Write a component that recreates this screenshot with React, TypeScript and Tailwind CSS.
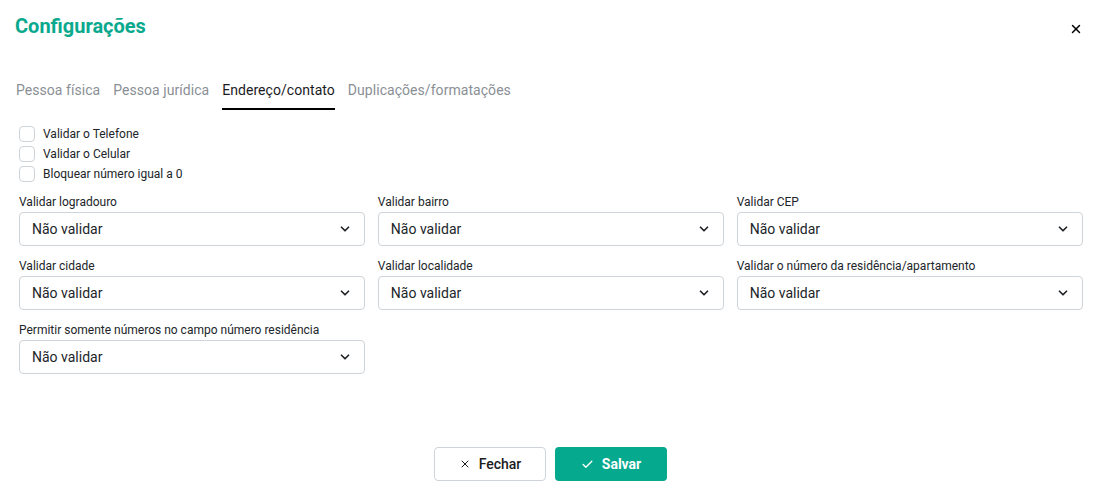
import { Check, ChevronDown, X } from "lucide-react";

const tabs = ["Pessoa física", "Pessoa jurídica", "Endereço/contato", "Duplicações/formatações"];
const checks = ["Validar o Telefone", "Validar o Celular", "Bloquear número igual a 0"];
const selects = [
  "Validar logradouro",
  "Validar bairro",
  "Validar CEP",
  "Validar cidade",
  "Validar localidade",
  "Validar o número da residência/apartamento",
  "Permitir somente números no campo número residência",
];

function SelectField({ label }: { label: string }) {
  return (
    <div className="flex flex-col">
      <label className="text-[12px] leading-4 text-[#212529] mb-[2px]">{label}</label>
      <div className="h-[34px] border border-[#ced4da] rounded-[4px] flex items-center justify-between pl-[12px] pr-[12px] bg-white">
        <span className="text-[14px] text-[#212529]">Não validar</span>
        <ChevronDown className="w-[14px] h-[14px] text-[#212529]" strokeWidth={3} />
      </div>
    </div>
  );
}

export default function App() {
  return (
    <div className="w-[1097px] h-[498px] bg-white flex flex-col font-['Roboto',sans-serif] text-[#212529]">
      <div className="flex items-center justify-between pl-[15px] pr-[14px] pt-[12px]">
        <h1 className="text-[20px] leading-7 font-bold text-[#0aa98e]">Configurações</h1>
        <X className="w-[14px] h-[14px] text-black mt-[6px]" strokeWidth={2.5} />
      </div>
      <div className="flex pl-[16px] mt-[40px] gap-[13px]">
        {tabs.map((t) => (
          <div
            key={t}
            className={`text-[14px] leading-5 pb-[8px] border-b-2 tracking-[0.05px] ${
              t === "Endereço/contato" ? "text-[#1b1b1f] border-black" : "text-[#8a8f96] border-transparent"
            }`}
          >
            {t}
          </div>
        ))}
      </div>
      <div className="flex flex-col pl-[19px] mt-[14px]">
        {checks.map((c) => (
          <div key={c} className="flex items-center h-[20px]">
            <span className="w-[16px] h-[16px] border border-[#ced4da] rounded-[4px] bg-white" />
            <span className="ml-[8px] text-[12px] text-[#212529]">{c}</span>
          </div>
        ))}
      </div>
      <div className="grid grid-cols-3 gap-x-[12.5px] gap-y-[12px] pl-[19px] pr-[14px] mt-[10px]">
        {selects.map((s) => (
          <SelectField key={s} label={s} />
        ))}
      </div>
      <div className="flex-1" />
      <div className="flex justify-center gap-[9px] pb-[17px] pl-[4px]">
        <button className="w-[112px] h-[34px] border border-[#ced4da] rounded-[4px] bg-white flex items-center justify-center gap-[8px] text-[14px] font-medium text-[#1b1b1f]">
          <X className="w-[12px] h-[12px]" strokeWidth={2} />
          Fechar
        </button>
        <button className="w-[112px] h-[34px] rounded-[4px] bg-[#04a98e] flex items-center justify-center gap-[8px] text-[14px] font-bold text-white">
          <Check className="w-[13px] h-[13px]" strokeWidth={2.5} />
          Salvar
        </button>
      </div>
    </div>
  );
}
